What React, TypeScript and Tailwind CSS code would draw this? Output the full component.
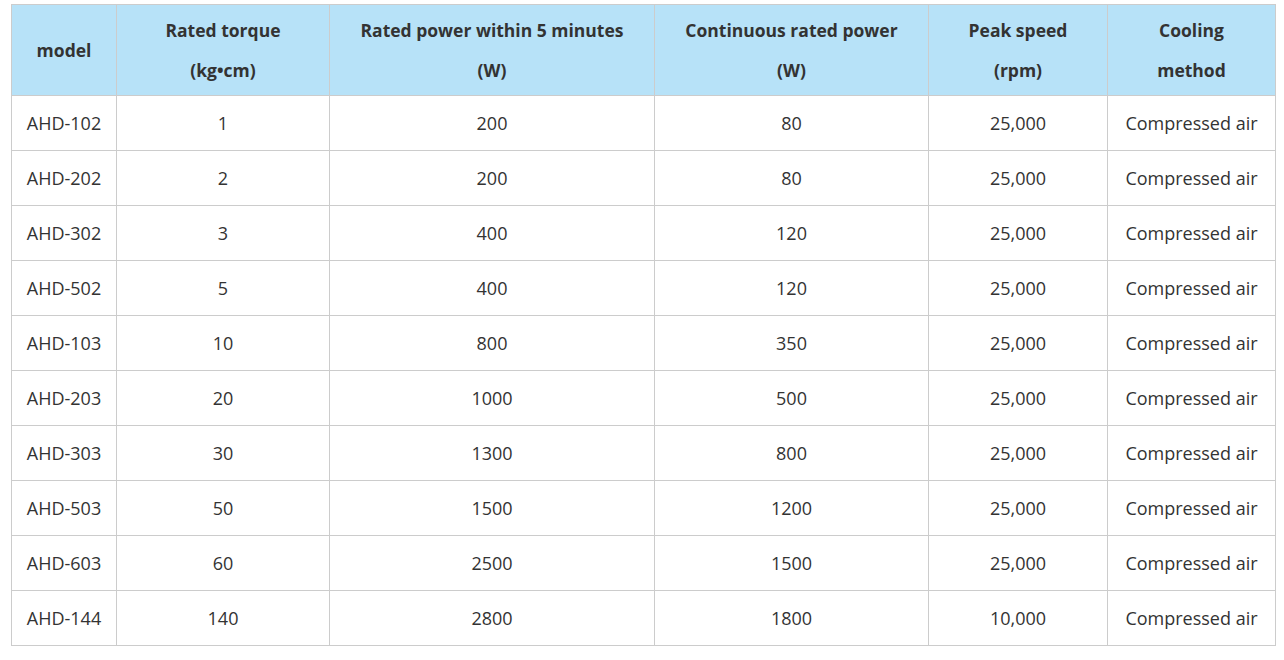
import React from "react";

const rows = [
  ["AHD-102", "1", "200", "80", "25,000", "Compressed air"],
  ["AHD-202", "2", "200", "80", "25,000", "Compressed air"],
  ["AHD-302", "3", "400", "120", "25,000", "Compressed air"],
  ["AHD-502", "5", "400", "120", "25,000", "Compressed air"],
  ["AHD-103", "10", "800", "350", "25,000", "Compressed air"],
  ["AHD-203", "20", "1000", "500", "25,000", "Compressed air"],
  ["AHD-303", "30", "1300", "800", "25,000", "Compressed air"],
  ["AHD-503", "50", "1500", "1200", "25,000", "Compressed air"],
  ["AHD-603", "60", "2500", "1500", "25,000", "Compressed air"],
  ["AHD-144", "140", "2800", "1800", "10,000", "Compressed air"],
];

const headers: string[][] = [
  ["model"],
  ["Rated torque", "(kg•cm)"],
  ["Rated power within 5 minutes", "(W)"],
  ["Continuous rated power", "(W)"],
  ["Peak speed", "(rpm)"],
  ["Cooling", "method"],
];

export default function App() {
  return (
    <div className="w-[1284px] h-[660px] bg-white pl-[11px] pt-[4px]" style={{ fontFamily: '"Open Sans", "Noto Sans", sans-serif' }}>
      <table className="table-fixed border-collapse w-[1264px] text-[#333]">
        <colgroup>
          <col className="w-[105px]" />
          <col className="w-[213px]" />
          <col className="w-[325px]" />
          <col className="w-[274px]" />
          <col className="w-[179px]" />
          <col className="w-[168px]" />
        </colgroup>
        <thead>
          <tr className="h-[91px] bg-[#b7e2f8]">
            {headers.map((h, i) => (
              <th key={i} className="border border-[#cccccc] text-center font-bold text-[17.5px] leading-[40px] p-0">
                {h.map((l, j) => (
                  <div key={j}>{l}</div>
                ))}
              </th>
            ))}
          </tr>
        </thead>
        <tbody>
          {rows.map((r, i) => (
            <tr key={i} className="h-[55px]">
              {r.map((c, j) => (
                <td key={j} className="border border-[#cccccc] text-center text-[18px] p-0">
                  {c}
                </td>
              ))}
            </tr>
          ))}
        </tbody>
      </table>
    </div>
  );
}
